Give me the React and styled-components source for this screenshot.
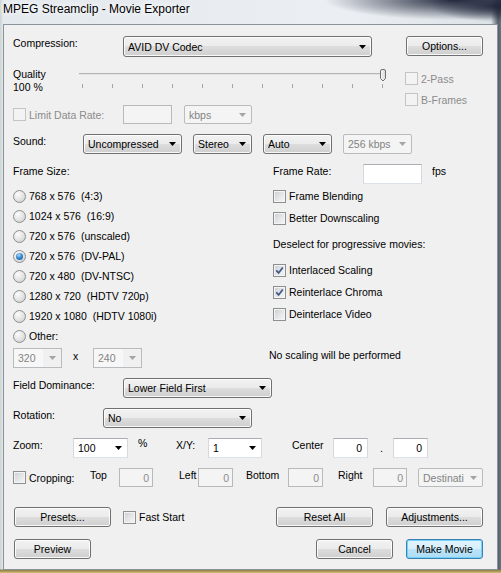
import React from 'react'
import styled, { createGlobalStyle, css } from 'styled-components'

const GlobalStyle = createGlobalStyle`
  * { box-sizing: border-box; }
  html, body { margin: 0; padding: 0; }
  body {
    width: 501px;
    height: 573px;
    overflow: hidden;
    font-family: 'Liberation Sans', Arial, sans-serif;
    font-size: 10.5px;
    color: #000;
  }
`

const Window = styled.div`
  width: 501px;
  height: 573px;
  display: flex;
  flex-direction: column;
  background:
    radial-gradient(130px 20px at 455px 0px, rgba(36, 42, 62, 1), rgba(36, 42, 62, 0)),
    radial-gradient(70px 16px at 501px 6px, rgba(30, 36, 54, 1), rgba(30, 36, 54, 0)),
    linear-gradient(to bottom, rgba(0, 0, 0, 0) 569px, #8d7b45 570px, #d2c079 573px),
    linear-gradient(to right, #c9d3cd 0px, #e4e9ee 3px, #ebeff3 70%, #dde2e7 98%, #56606c 99.4%, #6a7380 100%);
`

const TitleBar = styled.div`
  height: 24px;
  padding: 2px 0 0 3px;
  font-size: 12px;
  line-height: 15px;
  text-shadow: 0 0 6px #fff, 0 0 10px #fff;
`

const Client = styled.div`
  flex: 1;
  margin: 0 3px 3px 3px;
  border: 1px solid #8a929b;
  background: #f0f0f0;
  padding: 0 14px 0 9px;
  display: flex;
  flex-direction: column;
`

const Row = styled.div`
  display: flex;
  flex-shrink: 0;
  align-items: ${p => (p.$center ? 'center' : 'flex-start')};
  height: ${p => p.$h || 20}px;
  margin-top: ${p => p.$mt || 0}px;
`

const Section = styled.div`
  display: flex;
  flex-shrink: 0;
  margin-top: ${p => p.$mt || 0}px;
`

const Col = styled.div`
  display: flex;
  flex-direction: column;
  flex-shrink: 0;
  width: ${p => (p.$w ? `${p.$w}px` : 'auto')};
  padding-top: ${p => p.$pt || 0}px;
  gap: ${p => p.$gap || 0}px;
`

const Text = styled.span`
  display: block;
  flex-shrink: 0;
  width: ${p => (p.$w ? `${p.$w}px` : 'auto')};
  margin-left: ${p => p.$ml || 0}px;
  margin-top: ${p => p.$mt || 0}px;
  line-height: ${p => p.$lh || 14}px;
  white-space: pre;
  color: ${p => (p.$off ? '#8b8b8b' : '#000')};
`

const Button = styled.div`
  flex-shrink: 0;
  display: flex;
  align-items: center;
  justify-content: center;
  width: ${p => p.$w}px;
  height: ${p => p.$h || 20}px;
  margin-left: ${p => (p.$auto ? 'auto' : `${p.$ml || 0}px`)};
  border: 1px solid #707070;
  border-radius: 3px;
  background: linear-gradient(#f2f2f2 0%, #ebebeb 50%, #dddddd 50%, #cfcfcf 100%);
  box-shadow: inset 0 0 0 1px rgba(255, 255, 255, 0.85);
  ${p => p.$default && css`
    border-color: #3c7fb1;
    background: linear-gradient(#e3f4fc 0%, #d6effb 50%, #bde4f8 50%, #addcf5 100%);
    box-shadow: inset 0 0 0 1px #6fd3fb;
  `}
`

const Select = styled.div`
  flex-shrink: 0;
  display: flex;
  align-items: center;
  width: ${p => p.$w}px;
  height: ${p => p.$h || 20}px;
  margin-left: ${p => p.$ml || 0}px;
  padding: 0 5px 0 4px;
  border: 1px solid #707070;
  border-radius: 3px;
  background: linear-gradient(#f2f2f2 0%, #ebebeb 50%, #dddddd 50%, #cfcfcf 100%);
  box-shadow: inset 0 0 0 1px rgba(255, 255, 255, 0.85);
  white-space: nowrap;
  ${p => p.$kind === 'combo' && css`
    border-radius: 0;
    border-color: #abadb3 #d5d8de #dde2e8 #d5d8de;
    background: #fff;
    box-shadow: none;
  `}
  ${p => p.$kind === 'off' && css`
    border-color: #b8bcbf;
    border-radius: 2px;
    background: #f4f4f4;
    box-shadow: none;
    color: #838383;
  `}
  ${p => p.$kind === 'offcombo' && css`
    border-radius: 0;
    border-color: #b8bcbf;
    background: linear-gradient(to right, #f7f7f7 0 62%, #f0f0f0 62%);
    box-shadow: none;
    color: #838383;
  `}
`

const SelectValue = styled.span`
  flex: 1;
  overflow: hidden;
  line-height: 14px;
`

const ArrowSvg = styled.svg`
  flex-shrink: 0;
  margin-left: 4px;
`

const Arrow = ({ off }) => (
  <ArrowSvg width="7" height="4" viewBox="0 0 7 4">
    <polygon points="0,0 7,0 3.5,4" fill={off ? '#a5a5a5' : '#000'} />
  </ArrowSvg>
)

const Drop = ({ w, h, ml, kind, children }) => (
  <Select $w={w} $h={h} $ml={ml} $kind={kind}>
    <SelectValue>{children}</SelectValue>
    <Arrow off={kind === 'off' || kind === 'offcombo'} />
  </Select>
)

const Field = styled.div`
  flex-shrink: 0;
  display: flex;
  align-items: center;
  justify-content: flex-end;
  width: ${p => p.$w}px;
  height: ${p => p.$h || 20}px;
  margin-left: ${p => p.$ml || 0}px;
  padding-right: ${p => p.$pr ?? 5}px;
  background: #fff;
  border: 1px solid;
  border-color: #abadb3 #d5d8de #dde2e8 #d5d8de;
  line-height: 14px;
  ${p => p.$off && css`
    background: #f4f4f4;
    border-color: #b9b9b9;
    color: #8b8b8b;
  `}
`

const CheckRow = styled.div`
  display: flex;
  flex-shrink: 0;
  align-items: center;
  gap: 3px;
  height: ${p => p.$h || 13}px;
  margin-left: ${p => p.$ml || 0}px;
`

const Box = styled.span`
  flex-shrink: 0;
  display: flex;
  align-items: center;
  justify-content: center;
  width: 13px;
  height: 13px;
  border: 1px solid #8e8f8f;
  background: linear-gradient(135deg, #c9cdd3 0%, #e6e7e9 55%, #f7f7f7 100%);
  box-shadow: inset 0 0 0 1px #f4f4f4;
  ${p => p.$off && css`
    border-color: #c4c4c4;
    background: #f3f3f3;
    box-shadow: none;
  `}
`

const CheckMark = () => (
  <svg width="9" height="9" viewBox="0 0 9 9">
    <path d="M1.3 4.4 L3.6 6.9 L7.8 1.4" fill="none" stroke="#3f5887" strokeWidth="1.7" />
  </svg>
)

const Check = ({ label, checked, off, h, ml, w }) => (
  <CheckRow $h={h} $ml={ml}>
    <Box $off={off}>{checked && <CheckMark />}</Box>
    <Text $off={off} $w={w}>{label}</Text>
  </CheckRow>
)

const RadioRow = styled.div`
  display: flex;
  align-items: center;
  gap: 3px;
  height: 20px;
`

const RadioDot = styled.span`
  flex-shrink: 0;
  display: flex;
  align-items: center;
  justify-content: center;
  width: 13px;
  height: 13px;
  border-radius: 50%;
  border: 1px solid #8e8f8f;
  background: radial-gradient(circle at 35% 30%, #fbfbfb 0%, #e2e2e2 55%, #c9c9c9 100%);
  &::after {
    content: '';
    display: ${p => (p.$on ? 'block' : 'none')};
    width: 7px;
    height: 7px;
    border-radius: 50%;
    background: radial-gradient(circle at 40% 30%, #a9dcfb 0%, #3a8bd0 45%, #154c85 100%);
  }
`

const Radio = ({ label, on }) => (
  <RadioRow>
    <RadioDot $on={on} />
    <Text>{label}</Text>
  </RadioRow>
)

const QualityLabel = styled.div`
  flex-shrink: 0;
  width: 66px;
  padding-top: 2px;
  line-height: 13px;
`

const Slider = styled.div`
  position: relative;
  width: 307px;
  padding-top: 7px;
`

const Track = styled.div`
  width: 304px;
  height: 2px;
  border-top: 1px solid #b3b3b3;
  background: #e4e4e4;
`

const Ticks = styled.div`
  display: flex;
  justify-content: space-between;
  width: 301px;
  margin: 9px 0 0 3px;
`

const Tick = styled.span`
  width: 1px;
  height: 4px;
  background: #a4a4a4;
`

const Thumb = styled.svg`
  position: absolute;
  left: 300px;
  top: 3px;
`

const Status = styled.span`
  display: block;
  margin: 23px 0 0 -4px;
  line-height: 14px;
`

const radios = [
  '768 x 576  (4:3)',
  '1024 x 576  (16:9)',
  '720 x 576  (unscaled)',
  '720 x 576  (DV-PAL)',
  '720 x 480  (DV-NTSC)',
  '1280 x 720  (HDTV 720p)',
  '1920 x 1080  (HDTV 1080i)',
  'Other:',
]

export default function App() {
  return (
    <>
      <GlobalStyle />
      <Window>
        <TitleBar>MPEG Streamclip - Movie Exporter</TitleBar>
        <Client>
          <Row $mt={11} $h={21}>
            <Text $w={110}>Compression:</Text>
            <Drop w={249} h={21}>AVID DV Codec</Drop>
            <Button $w={77} $ml={34}>Options...</Button>
          </Row>

          <Section $mt={9}>
            <Col $w={392}>
              <Row $h={39}>
                <QualityLabel>
                  Quality
                  <br />
                  100 %
                </QualityLabel>
                <Slider>
                  <Track />
                  <Ticks>
                    {Array.from({ length: 11 }).map((_, i) => <Tick key={i} />)}
                  </Ticks>
                  <Thumb width="8" height="13" viewBox="0 0 8 13">
                    <defs>
                      <linearGradient id="thumbFill" x1="0" y1="0" x2="1" y2="0">
                        <stop offset="0" stopColor="#fafafa" />
                        <stop offset="1" stopColor="#d6d6d6" />
                      </linearGradient>
                    </defs>
                    <path
                      d="M1.5 2 Q1.5 0.5 3 0.5 H5 Q6.5 0.5 6.5 2 V9.5 L4 12 L1.5 9.5 Z"
                      fill="url(#thumbFill)"
                      stroke="#707070"
                    />
                  </Thumb>
                </Slider>
              </Row>
              <Row $h={19} $center>
                <Check label="Limit Data Rate:" off w={94} />
                <Field $w={49} $h={19} $off />
                <Drop w={68} h={19} ml={12} kind="off">kbps</Drop>
              </Row>
            </Col>
            <Col $pt={6} $gap={8}>
              <Check label="2-Pass" off />
              <Check label="B-Frames" off />
            </Col>
          </Section>

          <Row $mt={10}>
            <Text $w={70}>Sound:</Text>
            <Drop w={99}>Uncompressed</Drop>
            <Drop w={59} ml={11}>Stereo</Drop>
            <Drop w={69} ml={11}>Auto</Drop>
            <Drop w={69} ml={11} kind="off">256 kbps</Drop>
          </Row>

          <Section $mt={10}>
            <Col $w={260}>
              <Text>Frame Size:</Text>
              <Col $pt={8}>
                {radios.map((r, i) => (
                  <Radio key={r} label={r} on={i === 3} />
                ))}
              </Col>
              <Row $mt={2}>
                <Drop w={49} kind="offcombo">320</Drop>
                <Text $ml={11} $w={20} $mt={1}>x</Text>
                <Drop w={49} kind="offcombo">240</Drop>
              </Row>
            </Col>
            <Col>
              <Row>
                <Text $w={90}>Frame Rate:</Text>
                <Field $w={59} />
                <Text $ml={10}>fps</Text>
              </Row>
              <Col $pt={1}>
                <Check label="Frame Blending" h={22} />
                <Check label="Better Downscaling" h={22} />
                <Text $lh={30}>Deselect for progressive movies:</Text>
                <Check label="Interlaced Scaling" checked h={22} />
                <Check label="Reinterlace Chroma" checked h={22} />
                <Check label="Deinterlace Video" h={22} />
              </Col>
              <Status>No scaling will be performed</Status>
            </Col>
          </Section>

          <Row $mt={10}>
            <Text $w={110}>Field Dominance:</Text>
            <Drop w={149}>Lower Field First</Drop>
          </Row>

          <Row $mt={10}>
            <Text $w={90}>Rotation:</Text>
            <Drop w={149}>No</Drop>
          </Row>

          <Row $mt={10}>
            <Text $w={60}>Zoom:</Text>
            <Drop w={55} kind="combo">100</Drop>
            <Text $ml={10} $w={38} $mt={-2}>%</Text>
            <Text $w={32}>X/Y:</Text>
            <Drop w={54} kind="combo">1</Drop>
            <Text $ml={30} $w={41}>Center</Text>
            <Field $w={35}>0</Field>
            <Text $ml={12} $w={13} $mt={3}>.</Text>
            <Field $w={35}>0</Field>
          </Row>

          <Row $mt={10} $h={19}>
            <Check label="Cropping:" h={19} w={61} />
            <Text $w={29}>Top</Text>
            <Field $w={34} $h={19} $pr={3} $off>0</Field>
            <Text $ml={26} $w={19}>Left</Text>
            <Field $w={35} $h={19} $pr={3} $off>0</Field>
            <Text $ml={13} $w={42}>Bottom</Text>
            <Field $w={35} $h={19} $pr={3} $off>0</Field>
            <Text $ml={15} $w={35}>Right</Text>
            <Field $w={34} $h={19} $pr={3} $off>0</Field>
            <Drop w={65} h={19} ml={11} kind="off">Destinati</Drop>
          </Row>

          <Row $mt={20} $center>
            <Button $w={97} $ml={1}>Presets...</Button>
            <Check label="Fast Start" h={20} ml={12} />
            <Button $w={97} $auto>Reset All</Button>
            <Button $w={97} $ml={13}>Adjustments...</Button>
          </Row>

          <Row $mt={12} $center>
            <Button $w={77} $ml={1}>Preview</Button>
            <Button $w={77} $auto>Cancel</Button>
            <Button $w={77} $ml={13} $default>Make Movie</Button>
          </Row>
        </Client>
      </Window>
    </>
  )
}
